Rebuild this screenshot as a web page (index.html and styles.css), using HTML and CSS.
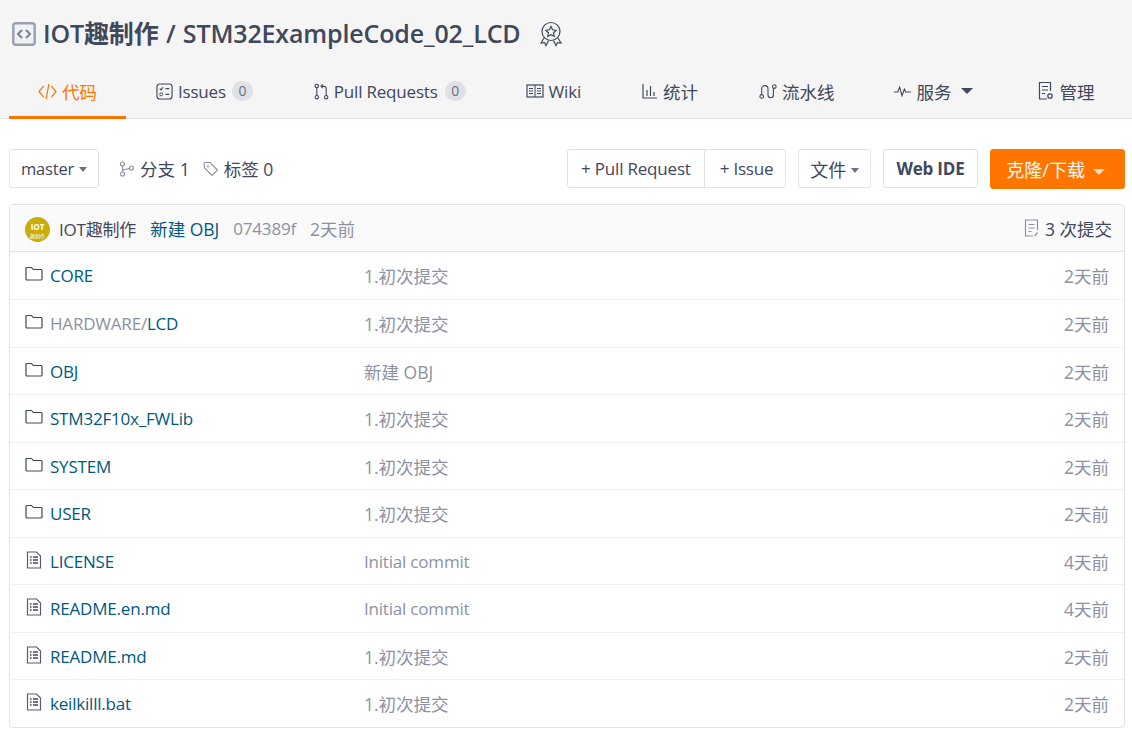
FILE: index.html
```html
<!DOCTYPE html>
<html lang="zh-CN">
<head>
    <meta charset="UTF-8" />
    <title>IOT趣制作 / STM32ExampleCode_02_LCD</title>
    <link rel="stylesheet" href="styles.css">
</head>
<body>
    <svg class="icon-defs" width="0" height="0">
        <symbol id="i-folder" viewBox="0 0 18 16">
            <path d="M1 2.500a1 1 0 0 1 1-1h4.600l1.600 2h7.800a1 1 0 0 1 1 1v8.500a1 1 0 0 1-1 1H2a1 1 0 0 1-1-1z" fill="none" stroke="#40485b" stroke-width="1.200"/>
        </symbol>
        <symbol id="i-file" viewBox="0 0 16 18">
            <path d="M1.500 1h9l4 4v12h-13z" fill="none" stroke="#5a5a70" stroke-width="1.200"/>
            <path d="M4 6h1.600M7 6h5M4 9h1.600M7 9h5M4 12h1.600M7 12h5" fill="none" stroke="#40485b" stroke-width="1.400"/>
        </symbol>
    </svg>

    <header class="repo-header">
        <div class="repo-title">
            <svg class="title-icon" viewBox="0 0 24 24" width="24" height="24">
                <rect x="1.300" y="1.300" width="21.400" height="21.400" rx="2.500" fill="#f0f1f4" stroke="#9a9fb0" stroke-width="2.400"/>
                <path d="M10 8l-4 4 4 4M14 8l4 4-4 4" fill="none" stroke="#7a8095" stroke-width="2"/>
            </svg>
            <h1>IOT趣制作 / STM32ExampleCode_02_LCD</h1>
            <svg class="title-badge" viewBox="0 0 24 26" width="24" height="26">
                <circle cx="12" cy="10.500" r="9" fill="none" stroke="#40485b" stroke-width="1.200"/>
                <path d="M12 5.500l1.600 3.300 3.600.5-2.600 2.500.6 3.600-3.200-1.700-3.200 1.700.6-3.600-2.600-2.500 3.600-.5z" fill="none" stroke="#40485b" stroke-width="1.200"/>
                <path d="M5 17l-3 5 3.500-.4 1.500 3 2.500-5M19 17l3 5-3.500-.4-1.500 3-2.500-5" fill="none" stroke="#40485b" stroke-width="1.200"/>
            </svg>
        </div>
        <nav class="repo-tabs">
            <a class="tab active">
                <svg viewBox="0 0 20 18" width="19" height="17"><path d="M6 3L1 9l5 6M14 3l5 6-5 6M11.500 1L8.500 17" fill="none" stroke="#ff7500" stroke-width="1.300"/></svg>
                <span class="zh">代码</span>
            </a>
            <a class="tab">
                <svg viewBox="0 0 18 18" width="17" height="17"><rect x="1" y="1" width="16" height="16" rx="3" fill="none" stroke="#40485b" stroke-width="1.200"/><path d="M4 6l1.300 1.300L7.500 4.500M10 6h4M10 12h4" fill="none" stroke="#40485b" stroke-width="1.200"/><circle cx="5.500" cy="12" r="1.600" fill="none" stroke="#40485b"/></svg>
                Issues <span class="count count-tight">0</span>
            </a>
            <a class="tab tab-pr">
                <svg viewBox="0 0 16 18" width="15" height="17"><circle cx="3" cy="3" r="1.800" fill="none" stroke="#40485b" stroke-width="1.200"/><circle cx="3" cy="15" r="1.800" fill="none" stroke="#40485b" stroke-width="1.200"/><circle cx="13" cy="15" r="1.800" fill="none" stroke="#40485b" stroke-width="1.200"/><path d="M3 5v8M13 13V5.500a2 2 0 0 0-2-2H8M9.500 1.500l-2 2 2 2" fill="none" stroke="#40485b" stroke-width="1.200"/></svg>
                Pull Requests <span class="count">0</span>
            </a>
            <a class="tab tab-wide">
                <svg viewBox="0 0 18 14" width="18" height="14"><rect x="1" y="1" width="16" height="12" fill="none" stroke="#40485b" stroke-width="1.200"/><path d="M9 1v12M3 4.500h4M3 7h4M3 9.500h4M11 4.500h4M11 7h4M11 9.500h4" fill="none" stroke="#40485b"/></svg>
                Wiki
            </a>
            <a class="tab tab-wide">
                <svg viewBox="0 0 16 16" width="16" height="16"><path d="M1 1v14h14M5 7v6M8.500 3v10M12 9v4" fill="none" stroke="#40485b" stroke-width="1.200"/></svg>
                <span class="zh">统计</span>
            </a>
            <a class="tab">
                <svg viewBox="0 0 20 18" width="18" height="17"><circle cx="3" cy="14.500" r="2" fill="none" stroke="#40485b" stroke-width="1.200"/><circle cx="17" cy="3.500" r="2" fill="none" stroke="#40485b" stroke-width="1.200"/><path d="M3 12.500V6a3.500 3.500 0 0 1 7 0v7a3 3 0 0 0 6 0V5.500" fill="none" stroke="#40485b" stroke-width="1.200"/></svg>
                <span class="zh">流水线</span>
            </a>
            <a class="tab tab-menu">
                <svg viewBox="0 0 18 12" width="17" height="12"><path d="M0 7h4l2-5 2.500 9 2.500-7 1.500 3H18" fill="none" stroke="#40485b" stroke-width="1.200"/></svg>
                <span class="zh">服务</span> <i class="caret caret-big"></i>
            </a>
            <a class="tab">
                <svg viewBox="0 0 16 20" width="16" height="20"><path d="M9 18H1.500V1.500h11V10M4 5.500h6M4 9h6M4 12.500h3" fill="none" stroke="#40485b" stroke-width="1.200"/><circle cx="12" cy="15" r="2.200" fill="none" stroke="#40485b" stroke-width="1.300"/></svg>
                <span class="zh">管理</span>
            </a>
        </nav>
    </header>

    <main class="repo-main">
        <div class="toolbar">
            <button class="btn btn-branch">master <i class="caret"></i></button>
            <span class="ref-link zh">
                <svg viewBox="0 0 16 16" width="16" height="16"><circle cx="3.500" cy="3" r="2" fill="none" stroke="#8c92a4" stroke-width="1.100"/><circle cx="3.500" cy="13" r="2" fill="none" stroke="#8c92a4" stroke-width="1.100"/><circle cx="12.500" cy="7" r="2" fill="none" stroke="#8c92a4" stroke-width="1.100"/><path d="M3.500 5v6M3.500 10c0-2.500 6-1 7-3" fill="none" stroke="#8c92a4" stroke-width="1.100"/></svg>
                分支 1
            </span>
            <span class="ref-link zh">
                <svg viewBox="0 0 16 16" width="16" height="16"><path d="M1 2.500a1 1 0 0 1 1-1h5l7.500 7.500-5.500 5.500L1.500 7z" fill="none" stroke="#8c92a4" stroke-width="1.100"/><circle cx="5" cy="5.500" r="1" fill="#8c92a4"/></svg>
                标签 0
            </span>
            <div class="toolbar-right">
                <div class="btn-group">
                    <button class="btn">+ Pull Request</button>
                    <button class="btn">+ Issue</button>
                </div>
                <button class="btn btn-cn">文件 <i class="caret"></i></button>
                <button class="btn btn-strong">Web IDE</button>
                <button class="btn btn-cn btn-orange">克隆/下载 <i class="caret caret-big"></i></button>
            </div>
        </div>

        <div class="file-box">
            <div class="commit-bar">
                <span class="avatar">
                    <span class="avatar-top">IOT</span>
                    <span class="avatar-sub">趣制作</span>
                </span>
                <span class="commit-author">IOT趣制作</span>
                <span class="commit-msg zh">新建 OBJ</span>
                <span class="commit-meta">074389f</span>
                <span class="commit-meta zh">2天前</span>
                <span class="commit-count zh">
                    <svg viewBox="0 0 16 18" width="16" height="18"><path d="M9 17H1.500V1h12v10M4.500 5.500h6M4.500 9h6M4.500 12.500h3M10.500 17l3-3.500" fill="none" stroke="#8c92a4" stroke-width="1.200"/></svg>
                    3 次提交
                </span>
            </div>
            <div class="file-row"><svg class="file-icon"><use href="#i-folder"/></svg><a class="file-name">CORE</a><span class="file-msg zh">1.初次提交</span><span class="file-time zh">2天前</span></div>
            <div class="file-row"><svg class="file-icon"><use href="#i-folder"/></svg><a class="file-name"><span class="dim">HARDWARE/</span>LCD</a><span class="file-msg zh">1.初次提交</span><span class="file-time zh">2天前</span></div>
            <div class="file-row"><svg class="file-icon"><use href="#i-folder"/></svg><a class="file-name">OBJ</a><span class="file-msg zh">新建 OBJ</span><span class="file-time zh">2天前</span></div>
            <div class="file-row"><svg class="file-icon"><use href="#i-folder"/></svg><a class="file-name">STM32F10x_FWLib</a><span class="file-msg zh">1.初次提交</span><span class="file-time zh">2天前</span></div>
            <div class="file-row"><svg class="file-icon"><use href="#i-folder"/></svg><a class="file-name">SYSTEM</a><span class="file-msg zh">1.初次提交</span><span class="file-time zh">2天前</span></div>
            <div class="file-row"><svg class="file-icon"><use href="#i-folder"/></svg><a class="file-name">USER</a><span class="file-msg zh">1.初次提交</span><span class="file-time zh">2天前</span></div>
            <div class="file-row"><svg class="file-icon"><use href="#i-file"/></svg><a class="file-name">LICENSE</a><span class="file-msg">Initial commit</span><span class="file-time zh">4天前</span></div>
            <div class="file-row"><svg class="file-icon"><use href="#i-file"/></svg><a class="file-name">README.en.md</a><span class="file-msg">Initial commit</span><span class="file-time zh">4天前</span></div>
            <div class="file-row"><svg class="file-icon"><use href="#i-file"/></svg><a class="file-name">README.md</a><span class="file-msg zh">1.初次提交</span><span class="file-time zh">2天前</span></div>
            <div class="file-row"><svg class="file-icon"><use href="#i-file"/></svg><a class="file-name">keilkilll.bat</a><span class="file-msg zh">1.初次提交</span><span class="file-time zh">2天前</span></div>
        </div>
    </main>
</body>
</html>
```

FILE: styles.css
```css
* {
    box-sizing: border-box;
    margin: 0;
    padding: 0;
}

body {
    font-family: "Open Sans", "Noto Sans CJK SC", sans-serif;
    font-size: 17px;
    letter-spacing: -0.2px;
    color: #40485b;
    background: #fff;
    overflow: hidden;
}

.zh {
    font-size: 17.5px;
    letter-spacing: 0;
}

.icon-defs {
    position: absolute;
}

.repo-header {
    height: 119px;
    background: #f5f5f5;
    border-bottom: 1px solid #dfe3e9;
    padding: 16px 9px 0;
}

.repo-title {
    display: flex;
    align-items: center;
    height: 36px;
    padding-left: 3px;
}

.title-icon {
    margin-right: 7px;
}

.repo-title h1 {
    font-size: 25px;
    font-weight: 600;
    letter-spacing: -0.15px;
    word-spacing: 1px;
    color: #40485b;
    line-height: 36px;
    padding-bottom: 2px;
}

.title-badge {
    margin-left: 18px;
}

.repo-tabs {
    display: flex;
    margin-top: 15px;
    height: 52px;
}

.tab {
    display: flex;
    align-items: center;
    gap: 5px;
    height: 52px;
    padding: 0 30px 4px;
    color: #40485b;
    white-space: nowrap;
}

.tab:first-child {
    padding: 0 29px 1px;
}

.tab.active {
    color: #ff7500;
    border-bottom: 3px solid #ff7500;
}

.tab-pr {
    padding-left: 31px;
}

.tab-wide {
    padding-right: 31px;
}

.tab-menu {
    padding-right: 35px;
}

.count {
    display: inline-block;
    min-width: 21px;
    height: 20px;
    line-height: 20px;
    border-radius: 10px;
    background: #dfe1e6;
    color: #6a7186;
    font-size: 14px;
    text-align: center;
    margin-left: 2px;
}

.count-tight {
    margin-left: 1px;
}

.caret {
    display: inline-block;
    border-left: 4px solid transparent;
    border-right: 4px solid transparent;
    border-top: 5px solid #6a7186;
    vertical-align: middle;
    margin-bottom: 3px;
}

.caret-big {
    border-left-width: 6px;
    border-right-width: 6px;
    border-top-width: 6px;
    margin-bottom: 0;
    margin-left: 5px;
    border-top-color: #40485b;
}

.repo-main {
    padding: 30px 7px 0 9px;
}

.toolbar {
    display: flex;
    align-items: flex-start;
    height: 40px;
}

.toolbar-right {
    display: flex;
    align-items: flex-start;
    gap: 12px;
    margin-left: auto;
}

.btn {
    height: 39px;
    padding: 0 11px;
    font: inherit;
    letter-spacing: inherit;
    color: #40485b;
    background: #fff;
    border: 1px solid #dfe3e9;
    border-radius: 3px;
    white-space: nowrap;
}

.btn-branch {
    font-size: 16.5px;
}

.btn-branch .caret {
    margin-left: 1px;
}

.btn-cn {
    font-size: 18px;
    letter-spacing: 0;
}

.btn-group {
    display: flex;
}

.btn-group .btn {
    padding: 0 13px;
    border-radius: 3px 0 0 3px;
}

.btn-group .btn + .btn {
    margin-left: -1px;
    padding: 0 12px 0 15px;
    border-radius: 0 3px 3px 0;
}

.btn-strong {
    font-weight: 700;
    padding: 0 12.5px;
}

.btn-orange {
    width: 135px;
    height: 40px;
    padding: 0 14px 0 10px;
    background: #ff7500;
    border-color: #ff7500;
    color: #fff;
}

.btn-orange .caret {
    border-top-color: #ffd9b8;
    margin-left: 3px;
}

.ref-link {
    display: flex;
    align-items: center;
    gap: 5px;
    height: 39px;
    margin-left: 20px;
}

.ref-link + .ref-link {
    margin-left: 13px;
}

.file-box {
    margin-top: 15px;
    border: 1px solid #dfe3e9;
    border-radius: 4px;
    overflow: hidden;
}

.commit-bar {
    display: flex;
    align-items: center;
    height: 46.5px;
    padding: 1px 12px 0 15px;
    background: #fafafa;
    border-bottom: 1px solid #dfe3e9;
    white-space: nowrap;
}

.avatar {
    display: flex;
    flex-direction: column;
    align-items: center;
    justify-content: center;
    width: 25px;
    height: 25px;
    border-radius: 50%;
    background: #c8ad0c;
    color: #fff;
    margin: 3px 9px 0 0;
    letter-spacing: 0;
    overflow: hidden;
}

.avatar-top {
    font-size: 8px;
    font-weight: 700;
}

.avatar-sub {
    font-size: 5px;
}

.commit-msg {
    margin-left: 14px;
    color: #005980;
}

.commit-meta {
    margin-left: 14px;
    color: #8c92a4;
}

.commit-count {
    display: flex;
    align-items: center;
    gap: 5px;
    margin-left: auto;
}

.file-row {
    display: flex;
    align-items: center;
    height: 47.5px;
    padding: 1px 15px 0;
    border-top: 1px solid #eef0f3;
    white-space: nowrap;
}

.commit-bar + .file-row {
    border-top: none;
}

.file-icon {
    width: 18px;
    height: 18px;
    margin-right: 7px;
    margin-top: -3px;
}

.file-name {
    width: 314px;
    color: #005980;
}

.file-name .dim {
    color: #8c92a4;
}

.file-msg {
    color: #8c92a4;
}

.file-time {
    margin-left: auto;
    color: #8c92a4;
}
```
